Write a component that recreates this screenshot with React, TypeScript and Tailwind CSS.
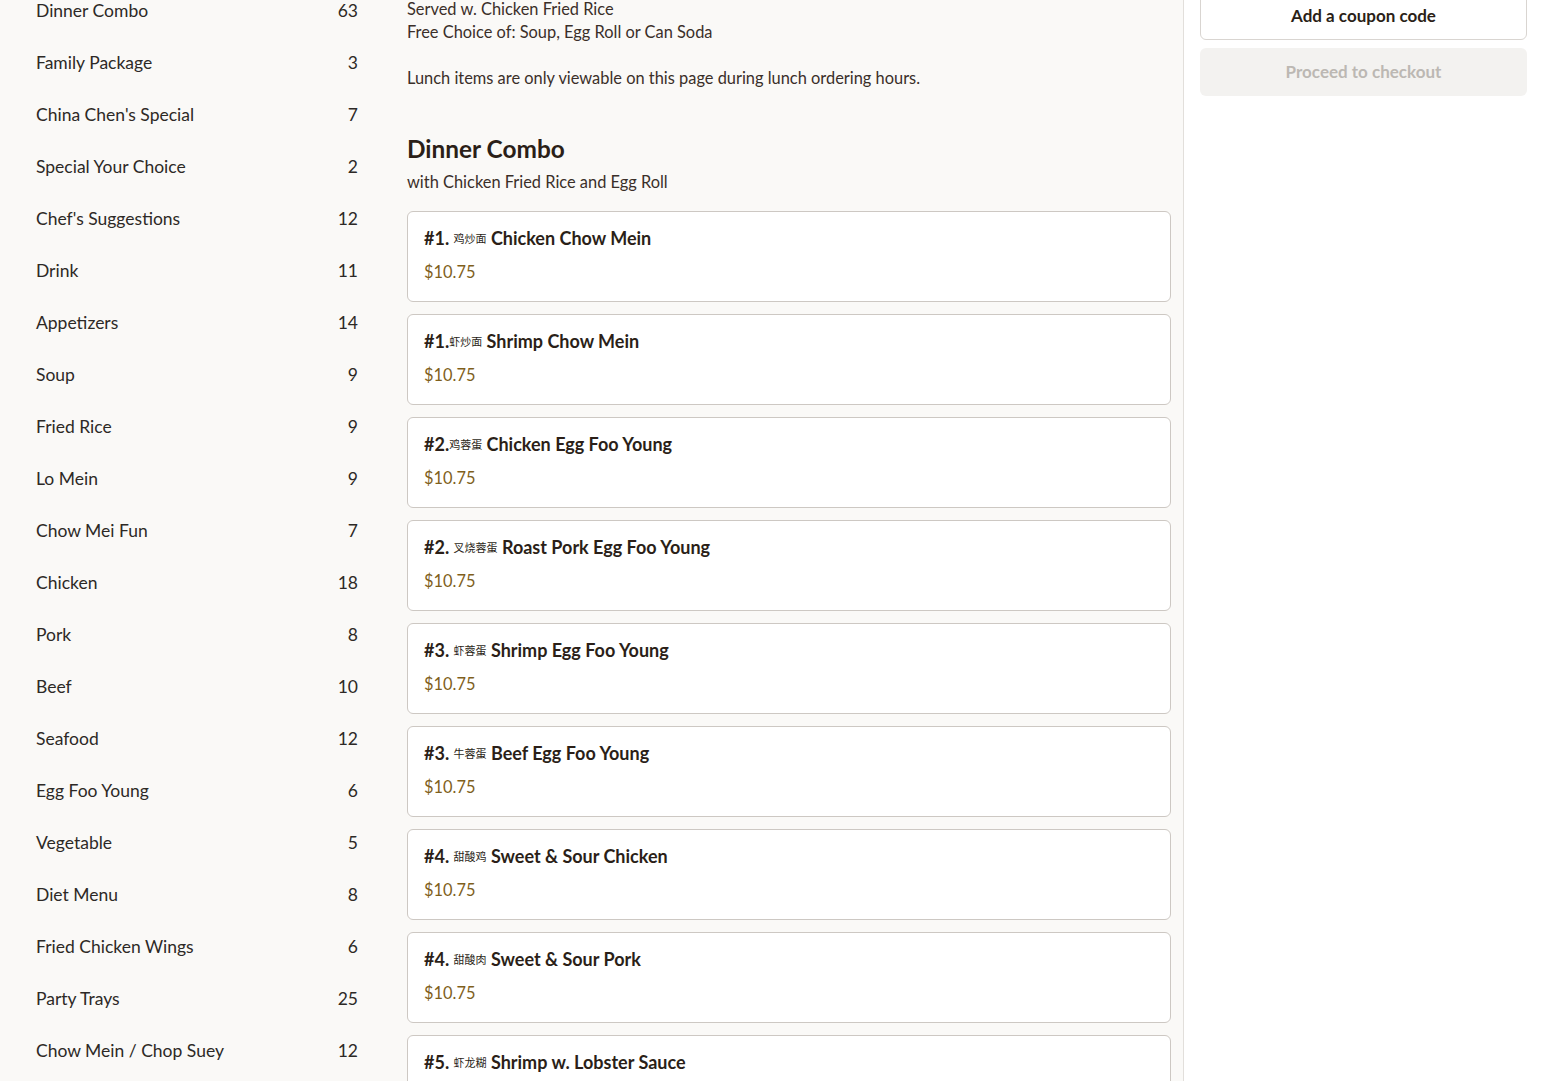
const categories = [
  { name: 'Dinner Combo', count: 63 },
  { name: 'Family Package', count: 3 },
  { name: "China Chen's Special", count: 7 },
  { name: 'Special Your Choice', count: 2 },
  { name: "Chef's Suggestions", count: 12 },
  { name: 'Drink', count: 11 },
  { name: 'Appetizers', count: 14 },
  { name: 'Soup', count: 9 },
  { name: 'Fried Rice', count: 9 },
  { name: 'Lo Mein', count: 9 },
  { name: 'Chow Mei Fun', count: 7 },
  { name: 'Chicken', count: 18 },
  { name: 'Pork', count: 8 },
  { name: 'Beef', count: 10 },
  { name: 'Seafood', count: 12 },
  { name: 'Egg Foo Young', count: 6 },
  { name: 'Vegetable', count: 5 },
  { name: 'Diet Menu', count: 8 },
  { name: 'Fried Chicken Wings', count: 6 },
  { name: 'Party Trays', count: 25 },
  { name: 'Chow Mein / Chop Suey', count: 12 },
]

const items = [
  { no: '#1. ', zh: '鸡炒面', en: 'Chicken Chow Mein' },
  { no: '#1.', zh: '虾炒面', en: 'Shrimp Chow Mein' },
  { no: '#2.', zh: '鸡蓉蛋', en: 'Chicken Egg Foo Young' },
  { no: '#2. ', zh: '叉烧蓉蛋', en: 'Roast Pork Egg Foo Young' },
  { no: '#3. ', zh: '虾蓉蛋', en: 'Shrimp Egg Foo Young' },
  { no: '#3. ', zh: '牛蓉蛋', en: 'Beef Egg Foo Young' },
  { no: '#4. ', zh: '甜酸鸡', en: 'Sweet & Sour Chicken' },
  { no: '#4. ', zh: '甜酸肉', en: 'Sweet & Sour Pork' },
  { no: '#5. ', zh: '虾龙糊', en: 'Shrimp w. Lobster Sauce' },
]

const MenuItem = ({ no, zh, en }: { no: string; zh: string; en: string }) => (
  <div className="h-[91px] overflow-hidden rounded-md border border-[#cdc8c3] bg-white px-4 pt-[14px]">
    <div className="flex h-[24px] items-center text-[18px] font-bold whitespace-pre text-[#2b1f18]">
      <span>{no}</span>
      <span className="text-[11px] leading-none font-normal">{zh}</span>
      <span> {en}</span>
    </div>
    <div className="mt-[10px] text-[16.4px] leading-[24px] text-[#7f5f1c]">$10.75</div>
  </div>
)

export default function App() {
  return (
    <div
      className="flex h-[1081px] overflow-hidden bg-[#faf9f7] text-[#2d2926]"
      style={{ fontFamily: 'Lato, "Noto Sans CJK SC", sans-serif' }}
    >
      {/* categories */}
      <aside className="w-[394px] shrink-0 px-9">
        <ul className="-mt-[15px]">
          {categories.map((c) => (
            <li key={c.name} className="flex h-[52px] items-center justify-between text-[17.5px]">
              <span>{c.name}</span>
              <span>{c.count}</span>
            </li>
          ))}
        </ul>
      </aside>

      {/* menu */}
      <main className="w-[790px] shrink-0 border-r border-[#e2dfdb] pl-[13px] pr-[12px]">
        <div className="-mt-[3px] text-[16.4px] leading-[23px] text-[#3a2f29]">
          <p>Served w. Chicken Fried Rice</p>
          <p>Free Choice of: Soup, Egg Roll or Can Soda</p>
          <p className="mt-[23px]">Lunch items are only viewable on this page during lunch ordering hours.</p>
        </div>

        <h2 className="mt-[44px] text-[24.4px] leading-[32px] font-bold text-[#2b1f18]">Dinner Combo</h2>
        <p className="mt-[5px] text-[16.4px] leading-[23px] text-[#3a2f29]">with Chicken Fried Rice and Egg Roll</p>

        <div className="mt-[18px] flex flex-col gap-3">
          {items.map((it, i) => (
            <MenuItem key={i} {...it} />
          ))}
        </div>
      </main>

      {/* cart */}
      <aside className="flex-1 bg-white pl-4 pr-[17px]">
        <div className="-mt-[9px] flex flex-col gap-2">
          <button className="h-[49px] rounded-md border border-[#d9d5d1] bg-white text-[17px] font-bold text-[#2b1f18]">
            Add a coupon code
          </button>
          <button className="h-[48px] rounded-md bg-[#f3f2f0] text-[17px] font-bold text-[#bcb8b3]">
            Proceed to checkout
          </button>
        </div>
      </aside>
    </div>
  )
}
